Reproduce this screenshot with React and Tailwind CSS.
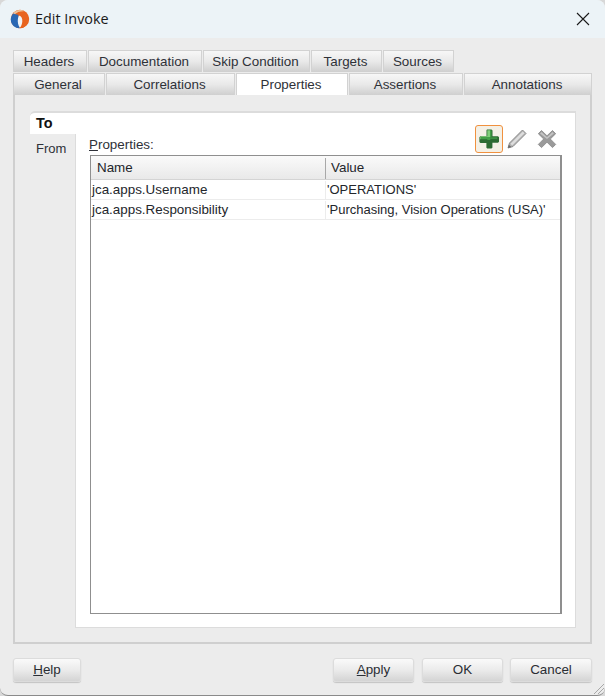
const FONT = "font-['Liberation_Sans',Arial,sans-serif]";

function Tab({ label, w, active }) {
  return (
    <div
      style={{ width: w }}
      className={`h-[22px] pt-px pr-[2px] flex items-center justify-center shrink-0 border border-[#d2d2d2] border-b-0 text-[13.4px] text-[#2e3138] ${
        active ? "bg-white" : "bg-gradient-to-b from-[#f7f7f7] via-[#e9e9e9] to-[#cfcfcf]"
      }`}
    >
      {label}
    </div>
  );
}

function Btn({ w, ml = "", children }) {
  return (
    <div
      style={{ width: w }}
      className={`${ml} h-[24px] pt-px flex items-center justify-center rounded-[3px] border border-[#dcdcdc] shadow-[0_1px_1px_#c4c4c4] bg-gradient-to-b from-[#fafafa] via-[#ebebeb] to-[#d4d4d4] text-[13.4px] text-[#2a2d33]`}
    >
      {children}
    </div>
  );
}

function Logo() {
  return (
    <svg width="20" height="20" viewBox="0 0 20 20" className="shrink-0">
      <circle cx="10" cy="10" r="9.200" fill="#e8641f" />
      <path d="M3 4.500C5 1.800 8 .6 11 1c1.500.2 2.500.8 3 1.300C10.500 2.200 6.500 3 3.500 6.500z" fill="#eec39a" />
      <path d="M3.200 4.500C-.2 8.500 0 14 3.800 17.300c1.600 1.300 3.800 2 5.700 1.900 .6-3 .5-6.500-.2-9.200-.3-1.500-.7-3-1.200-4.200-1.700-.4-3.300-.8-4.900-1.300z" fill="#2a68b4" />
      <path d="M9 6.500c2.400.5 3.500 3 3.300 6-.2 2.500-1 4.800-2.400 6.200-1.700-2.300-2.500-5.800-2-8.800.2-1.300.6-2.600 1.100-3.400z" fill="#f1f3f5" />
      <path d="M12.500 5c2.500 0 4.700 1.300 6 3 .7 3.600-.7 7.600-4 9.800-1.500 1-3 1.400-4.500 1.400 3-2.300 4.300-5.800 3.700-9.300-.3-2-1-3.700-1.200-4.900z" fill="#e8641f" />
    </svg>
  );
}

function PlusIcon() {
  return (
    <svg width="22" height="22" viewBox="0 0 22 22">
      <path d="M9 1.500h4.500l1 1v5.700h5.500l1 1v4.600l-1 1h-5.600v4.900l-1 .8H9.200l-.8-.8V15H2.400l-1-1V9.300l1-1.100h6.100V2.300z" fill="#2c6a32" />
      <path d="M9.300 2.300h2.700v6.700H3v2.300H2.300V9l.8-.7h6.200z" fill="#7fce79" />
      <path d="M12 2.300h1.500v6.700h-1.500zM9.300 9h3v3h-3zM3 9h6.300v2.300H3z" fill="#43a047" />
      <path d="M12 9.200h7.300v1.800H12z" fill="#3d9142" />
    </svg>
  );
}

function PencilIcon() {
  return (
    <svg width="22" height="22" viewBox="0 0 22 22">
      <path d="M16.500 2l3.500 3.500L7 18.500l-5 1.500 1.500-5z" fill="#b4b4b4" stroke="#8a8a8a" strokeWidth="1" strokeLinejoin="round" />
      <path d="M16.800 3.500l1.700 1.700L6.200 17.400l-1.700-1.700z" fill="#dedede" />
      <path d="M2 20l.9-3.200 2.300 2.300z" fill="#666" />
    </svg>
  );
}

function CrossIcon() {
  return (
    <svg width="20" height="20" viewBox="0 0 20 20">
      <path d="M4.500 1.500L10 6.800l5.500-5.300 3.200 3.200L13.300 10l5.400 5.400-3.200 3.200L10 13.200l-5.500 5.400-3.200-3.200L6.700 10 1.300 4.700z" fill="#9a9a9a" stroke="#868686" strokeWidth="0.800" strokeLinejoin="round" />
      <path d="M4.500 3l5.500 5.300L15.500 3l1.400 1.400L10 10 3 4.400z" fill="#c4c4c4" />
    </svg>
  );
}

export default function App() {
  return (
    <div className={`${FONT} w-[605px] h-[696px] bg-[#d8d8d8] overflow-hidden`}>
      <div className="relative w-full h-full rounded-[8px] bg-[#ececec] border-b border-[#8a8a8a] overflow-hidden flex flex-col">
        <div className="h-[38px] shrink-0 bg-[#ecf3f7] flex items-center pl-[10px] pr-[15px]">
          <Logo />
          <span className="ml-[5px] text-[14.4px] text-[#1a1a1a] font-['Open_Sans',sans-serif]">Edit Invoke</span>
          <svg width="14" height="14" viewBox="0 0 14 14" className="ml-auto">
            <path d="M1 1l12 12M13 1L1 13" stroke="#1a1a1a" strokeWidth="1.100" />
          </svg>
        </div>

        <div className="flex-1 flex flex-col px-[13px] pt-[12px]">
          <div className="flex gap-px">
            <Tab label="Headers" w={74} />
            <Tab label="Documentation" w={114} />
            <Tab label="Skip Condition" w={107} />
            <Tab label="Targets" w={71} />
            <Tab label="Sources" w={71} />
          </div>
          <div className="flex gap-px mt-px">
            <Tab label="General" w={92} />
            <Tab label="Correlations" w={129} />
            <Tab label="Properties" w={112} active />
            <Tab label="Assertions" w={114} />
            <Tab label="Annotations" w={128} />
          </div>

          <div className="h-[549px] w-[579px] border-2 border-t-0 border-[#cfcfcf] pt-[16px] pl-[15px] pr-[14px] pb-[14px] flex">
            <div className="w-[46px] shrink-0 flex flex-col">
              <div className="h-[23px] pt-px bg-white rounded-tl-[5px] border-t-2 border-[#dcdcdc] pl-[6px] flex items-center text-[14.4px] font-bold text-[#111]">
                To
              </div>
              <div className="flex-1 border-r border-[#dcdcdc]">
                <div className="h-[29px] pl-[6px] flex items-center text-[13px] text-[#2e3138]">From</div>
              </div>
            </div>
            <div className="flex-1 min-w-0 bg-white border-t-2 border-r border-b border-[#dcdcdc] flex flex-col">
              <div className="h-[42px] flex items-end pl-[13px] pr-[18px] shrink-0">
                <span className="text-[13.4px] text-[#2e3138] leading-[18px] mb-[1px]">
                  <u>P</u>roperties:
                </span>
                <div className="ml-auto flex items-center gap-[3px] mb-[2px]">
                  <div className="w-[28px] h-[28px] rounded-[3px] border border-[#f0913f] bg-[#f4f0e6] flex items-center justify-center">
                    <PlusIcon />
                  </div>
                  <PencilIcon />
                  <span className="ml-[6px]"><CrossIcon /></span>
                </div>
              </div>
              <div className="ml-[14px] mr-[13px] mb-[13px] flex-1 border border-r-2 border-[#8f8f8f] flex flex-col text-[13.4px] text-[#23262b]">
                <div className="h-[24px] pt-[2px] shrink-0 flex bg-gradient-to-b from-[#fafafa] to-[#e9e9e9] border-b border-[#d4d4d4]">
                  <div className="w-[235px] border-r border-[#a8a8a8] pl-[6px] flex items-center">Name</div>
                  <div className="flex-1 pl-[5px] flex items-center">Value</div>
                </div>
                <div className="h-[20px] pt-px flex border-b border-[#ececec]">
                  <div className="w-[235px] border-r border-[#ececec] pl-px flex items-center">jca.apps.Username</div>
                  <div className="flex-1 pl-px flex items-center text-[13px]">'OPERATIONS'</div>
                </div>
                <div className="h-[20px] pt-px flex border-b border-[#ececec]">
                  <div className="w-[235px] border-r border-[#ececec] pl-px flex items-center">jca.apps.Responsibility</div>
                  <div className="flex-1 pl-px flex items-center whitespace-nowrap text-[13px]">'Purchasing, Vision Operations (USA)'</div>
                </div>
              </div>
            </div>
          </div>

          <div className="flex items-center mt-[14px]">
            <Btn w={68}><span><u>H</u>elp</span></Btn>
            <div className="ml-auto flex">
              <Btn w={81}><span><u>A</u>pply</span></Btn>
              <Btn w={81} ml="ml-[8px]">OK</Btn>
              <Btn w={82} ml="ml-[7px]">Cancel</Btn>
            </div>
          </div>
        </div>

        <svg width="14" height="14" viewBox="0 0 14 14" className="absolute right-0 bottom-0">
          <path d="M13 3L3 13M13 7l-6 6M13 11l-2 2" stroke="#a8a8a8" strokeWidth="1" />
        </svg>
      </div>
    </div>
  );
}
